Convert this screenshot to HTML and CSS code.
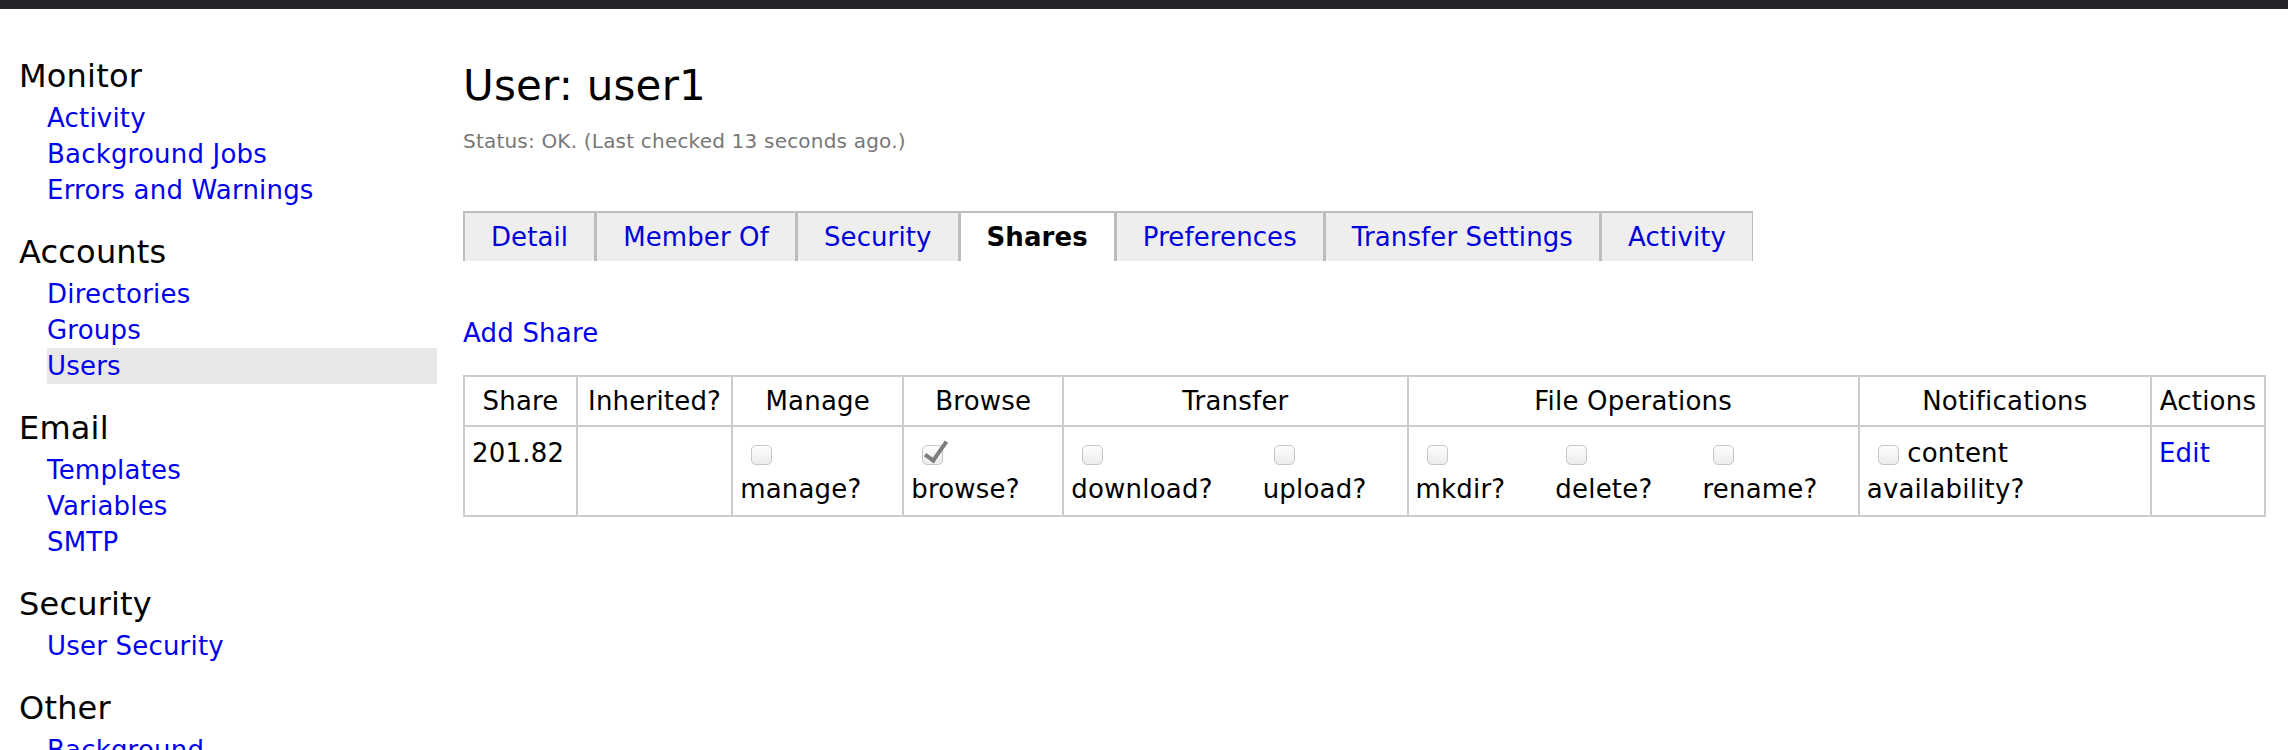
FILE: index.html
```html
<!DOCTYPE html>
<html lang="en">
<head>
    <meta charset="UTF-8">
    <title>User: user1</title>
    <link rel="stylesheet" href="styles.css">
</head>
<body>
    <div class="topbar"></div>
    <div class="layout">
        <nav class="sidebar">
            <div class="nav-group">
                <h2>Monitor</h2>
                <ul>
                    <li><a href="#">Activity</a></li>
                    <li><a href="#">Background Jobs</a></li>
                    <li><a href="#">Errors and Warnings</a></li>
                </ul>
            </div>
            <div class="nav-group">
                <h2>Accounts</h2>
                <ul>
                    <li><a href="#">Directories</a></li>
                    <li><a href="#">Groups</a></li>
                    <li class="current"><a href="#">Users</a></li>
                </ul>
            </div>
            <div class="nav-group">
                <h2>Email</h2>
                <ul>
                    <li><a href="#">Templates</a></li>
                    <li><a href="#">Variables</a></li>
                    <li><a href="#">SMTP</a></li>
                </ul>
            </div>
            <div class="nav-group">
                <h2>Security</h2>
                <ul>
                    <li><a href="#">User Security</a></li>
                </ul>
            </div>
            <div class="nav-group">
                <h2>Other</h2>
                <ul>
                    <li><a href="#">Background</a></li>
                </ul>
            </div>
        </nav>

        <main class="main">
            <h1>User: user1</h1>
            <p class="status">Status: OK. (Last checked 13 seconds ago.)</p>

            <ul class="tabs">
                <li><a href="#">Detail</a></li>
                <li><a href="#">Member Of</a></li>
                <li><a href="#">Security</a></li>
                <li class="active">Shares</li>
                <li><a href="#">Preferences</a></li>
                <li><a href="#">Transfer Settings</a></li>
                <li><a href="#">Activity</a></li>
            </ul>

            <p class="add-share"><a href="#">Add Share</a></p>

            <table class="shares">
                <colgroup>
                    <col class="col-share">
                    <col class="col-inherited">
                    <col class="col-manage">
                    <col class="col-browse">
                    <col class="col-transfer">
                    <col class="col-fileops">
                    <col class="col-notify">
                    <col class="col-actions">
                </colgroup>
                <tr>
                    <th>Share</th>
                    <th>Inherited?</th>
                    <th>Manage</th>
                    <th>Browse</th>
                    <th>Transfer</th>
                    <th>File Operations</th>
                    <th>Notifications</th>
                    <th>Actions</th>
                </tr>
                <tr>
                    <td>201.82</td>
                    <td></td>
                    <td>
                        <label class="opt"><input type="checkbox" disabled><span>manage?</span></label>
                    </td>
                    <td>
                        <label class="opt"><input type="checkbox" checked disabled><span>browse?</span></label>
                    </td>
                    <td>
                        <div class="opts">
                            <label class="opt"><input type="checkbox" disabled><span>download?</span></label>
                            <label class="opt"><input type="checkbox" disabled><span>upload?</span></label>
                        </div>
                    </td>
                    <td>
                        <div class="opts">
                            <label class="opt"><input type="checkbox" disabled><span>mkdir?</span></label>
                            <label class="opt"><input type="checkbox" disabled><span>delete?</span></label>
                            <label class="opt"><input type="checkbox" disabled><span>rename?</span></label>
                        </div>
                    </td>
                    <td>
                        <label class="inline-opt"><input type="checkbox" disabled> content availability?</label>
                    </td>
                    <td><a href="#">Edit</a></td>
                </tr>
            </table>
        </main>
    </div>
</body>
</html>
```

FILE: styles.css
```css
body { margin: 0; font-family: "DejaVu Sans", Verdana, sans-serif; letter-spacing: 0.2px; color: #000; background: #fff; }
a { color: #0000ee; text-decoration: none; }

.topbar { height: 9px; background-color: #232427; }
.layout { display: flex; align-items: flex-start; }

/* left menu */
.sidebar { flex: 0 0 418px; padding: 48px 0 0 19px; }
.nav-group + .nav-group { margin-top: 25px; }
.nav-group h2 { margin: 0 0 5px; font-size: 32px; line-height: 38px; font-weight: normal; }
.nav-group ul { margin: 0 0 0 28px; padding: 0; list-style: none; }
.nav-group li { font-size: 26px; line-height: 36px; }
.nav-group li.current { background-color: #e8e8e8; }

/* content */
.main { flex: 1; padding: 0 22px 0 26px; }
.main h1 { margin: 52px 0 0; font-size: 42px; line-height: 49px; font-weight: normal; }
.status { margin: 19px 0 0; font-size: 20px; line-height: 24px; color: #777; }

.tabs { display: flex; margin: 58px 0 0; padding: 0; list-style: none; letter-spacing: 0.1px; }
.tabs li { font-size: 26px; line-height: 48px; padding: 0 26px; border: 2px solid #bdbdbd; border-bottom: 0; border-right-width: 1px; background-color: #eeeeee; }
.tabs li a { color: #0000dd; }
.tabs li.active { background-color: #fff; font-weight: bold; }

.add-share { margin: 54px 0 0; font-size: 26px; line-height: 36px; }

.shares { width: 100%; margin-top: 24px; border-collapse: collapse; table-layout: fixed; font-size: 26px; line-height: 36px; }
.shares th, .shares td { border: 2px solid #cccccc; padding: 6px 7px; font-weight: normal; vertical-align: top; }
.shares td { padding: 8px 7px; }
.col-share { width: 113px; }
.col-inherited { width: 155px; }
.col-manage { width: 171px; }
.col-browse { width: 160px; }
.col-transfer { width: 344px; }
.col-fileops { width: 451px; }
.col-notify { width: 292px; }
.col-actions { width: 114px; }

.opts { display: flex; gap: 50px; }
.opt { display: flex; flex-direction: column; align-items: flex-start; }
.opt input { margin: 10px 0 6px 11px; }
.inline-opt input { margin: 0 0 0 11px; vertical-align: -3px; }

.shares input[type="checkbox"] { -webkit-appearance: none; appearance: none; position: relative; display: inline-block; width: 21px; height: 20px; box-sizing: border-box; border: 1px solid #c6c6c6; border-radius: 5px; background: linear-gradient(#fdfdfd, #ececec); }
.shares input[type="checkbox"]:checked::after { content: ""; position: absolute; left: 7px; top: -9px; width: 8px; height: 21px; border: solid #7d7d7d; border-width: 0 4px 4px 0; transform: rotate(35deg); }
```
